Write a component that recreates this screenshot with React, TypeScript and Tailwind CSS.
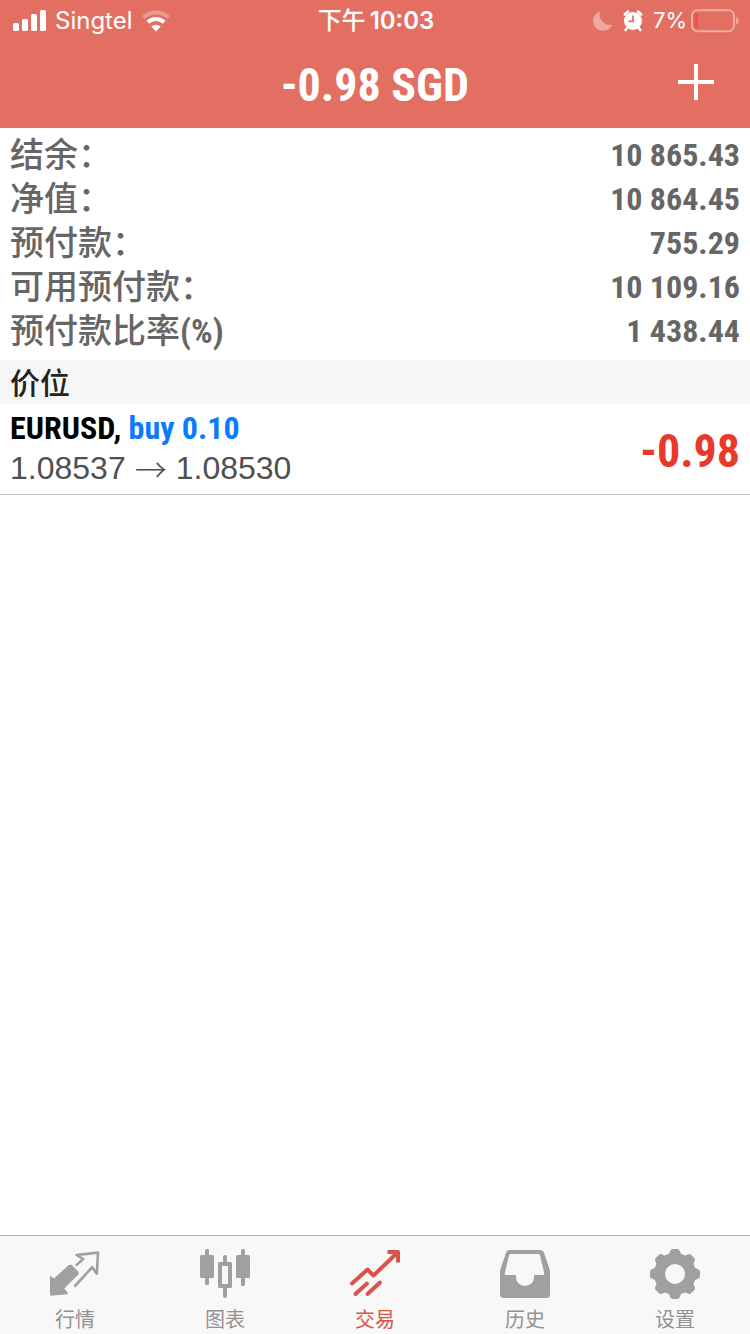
import type { ReactNode } from "react";

const account = [
  { label: "结余：", value: "10 865.43" },
  { label: "净值：", value: "10 864.45" },
  { label: "预付款：", value: "755.29" },
  { label: "可用预付款：", value: "10 109.16" },
  { label: "预付款比率", unit: "(%)", value: "1 438.44" },
];

const condensed = "font-['Roboto_Condensed','Liberation_Sans','Noto_Sans_CJK_SC',sans-serif]";

function SignalIcon() {
  return (
    <svg className="h-6 w-[34px]" viewBox="0 0 34 24" fill="currentColor" aria-hidden="true">
      <rect x="0" y="14" width="6" height="8" rx="1.6" />
      <rect x="9" y="10" width="6" height="12" rx="1.6" />
      <rect x="18" y="5" width="6" height="17" rx="1.6" />
      <rect x="27" y="1" width="6" height="21" rx="1.6" />
    </svg>
  );
}

function WifiIcon() {
  return (
    <svg className="h-6 w-[30px]" viewBox="0 0 30 24" fill="none" stroke="currentColor" aria-hidden="true">
      <path d="M2.2 8.6a18.4 18.4 0 0 1 25.6 0" strokeWidth="4" opacity="0.3" />
      <path d="M6.8 13.2a11.8 11.8 0 0 1 16.4 0" strokeWidth="4" />
      <path d="M10.2 17.6a7 7 0 0 1 9.6 0L15 22.4z" fill="currentColor" stroke="none" />
    </svg>
  );
}

function MoonIcon() {
  return (
    <svg className="h-6 w-5" viewBox="0 0 20 24" fill="currentColor" opacity="0.4" aria-hidden="true">
      <path d="M7 2.2A10 10 0 0 0 0 12a9.8 9.8 0 0 0 9.8 9.8 10 10 0 0 0 9.6-6.2C14 17.2 4.5 12.5 7 2.2z" />
    </svg>
  );
}

function AlarmIcon() {
  return (
    <svg className="h-6 w-5" viewBox="0 0 20 24" aria-hidden="true">
      <circle cx="10" cy="12" r="9" fill="currentColor" />
      <path
        d="M1.800 5.400 5 2.600M18.200 5.400 15 2.600M4.600 18.600 2.600 21M15.400 18.600l2 2.400"
        stroke="currentColor"
        strokeWidth="2.6"
        strokeLinecap="round"
        fill="none"
      />
      <path d="M10 6.4v6H5.4" stroke="#e26f62" strokeWidth="1.7" fill="none" />
    </svg>
  );
}

function BatteryIcon() {
  return (
    <svg className="h-6 w-12" viewBox="0 0 48 24" fill="none" aria-hidden="true">
      <rect x="1" y="1.2" width="42" height="21" rx="5.5" stroke="#fff" strokeOpacity="0.42" strokeWidth="2" />
      <path d="M45 8.2c2 .6 2.8 2 2.8 3.6s-.8 3-2.8 3.6z" fill="#fff" fillOpacity="0.42" />
      <path d="M7 4v15.4H6A2.6 2.6 0 0 1 3.6 17V6.6A2.6 2.6 0 0 1 6 4z" fill="#fd4a43" />
    </svg>
  );
}

function QuotesIcon() {
  return (
    <svg className="size-[50px]" viewBox="0 0 50 50" fill="none" aria-hidden="true">
      <path
        d="M25.8 16.6 33.2 10 26.5 6 48 3.6 46.8 24.8 42.2 18.2 24.5 37.5"
        stroke="currentColor"
        strokeWidth="2.6"
        strokeLinejoin="round"
      />
      <path
        d="M0 26.5 4 29.5 18.8 16 21.5 15.8 28.500 22.800 28.600 25.200 14.300 39.500 18.200 44 17 45.200 1 46.700 0 45.500z"
        fill="currentColor"
      />
    </svg>
  );
}

function ChartIcon() {
  return (
    <svg className="size-[50px]" viewBox="0 0 50 50" fill="currentColor" aria-hidden="true">
      <rect x="5" y="0" width="4" height="36" rx="1.5" />
      <rect x="0" y="6" width="14" height="23" rx="1.5" />
      <rect x="41" y="0" width="4" height="37" rx="1.5" />
      <rect x="36" y="6" width="14" height="23" rx="1.5" />
      <path
        fillRule="evenodd"
        d="M23 13V8a2 2 0 0 1 4 0v5h3.500a1.500 1.500 0 0 1 1.500 1.500v23a1.500 1.500 0 0 1-1.500 1.500H27v8a2 2 0 0 1-4 0v-8h-3.500a1.500 1.500 0 0 1-1.500-1.500v-23a1.500 1.500 0 0 1 1.500-1.500zM22 17v18h6V17z"
      />
    </svg>
  );
}

function TradeIcon() {
  return (
    <svg className="size-[50px]" viewBox="0 0 50 50" fill="none" stroke="currentColor" strokeWidth="4" aria-hidden="true">
      <path d="M2 34.500 17.500 20.500 23.500 26.500 46.500 4.500" strokeLinecap="round" strokeLinejoin="round" />
      <path d="M37.500 3H48v10.500" strokeLinejoin="round" />
      <path d="M5.500 45 17 34.500M17.500 45 30 33.500" strokeLinecap="round" />
    </svg>
  );
}

function HistoryIcon() {
  return (
    <svg className="size-[50px]" viewBox="0 0 50 50" fill="currentColor" fillRule="evenodd" aria-hidden="true">
      <path d="M10 1h30c2 0 3.200 1 4 2.800L50 21.500V45.500a3.500 3.500 0 0 1-3.500 3.500h-43A3.500 3.500 0 0 1 0 45.500V21.500L6 3.800C6.800 2 8 1 10 1zM11 5c-1 0-1.600.500-2 1.500L4.800 24c-.200 1.200.200 2 1.200 2H16v2.500a9 8.500 0 0 0 18 0V26h9c1 0 1.400-.800 1.200-2L40 6.500C39.600 5.500 39 5 38 5z" />
    </svg>
  );
}

const gearTeeth = [0, 45, 90, 135, 180, 225, 270, 315];

function GearIcon() {
  return (
    <svg className="size-[50px]" viewBox="0 0 50 50" fill="none" aria-hidden="true">
      <circle cx="25" cy="25" r="15.5" stroke="currentColor" strokeWidth="11" />
      <g fill="currentColor">
        {gearTeeth.map((angle) => (
          <path
            key={angle}
            transform={`rotate(${angle} 25 25)`}
            d="M15.500 7.500c2.500-.800 3.500-2 4.200-4.200C20.400 1 21.400 0 23 0h4c1.600 0 2.600 1 3.300 3.300.700 2.200 1.700 3.400 4.200 4.200L31 12H19z"
          />
        ))}
      </g>
    </svg>
  );
}

function Tab({ label, icon, active = false }: { label: string; icon: ReactNode; active?: boolean }) {
  return (
    <a
      href="#"
      aria-current={active ? "page" : undefined}
      className={`flex flex-col items-center gap-[7px] pt-3 ${active ? "text-[#d9534b]" : "text-[#a0a0a0]"}`}
    >
      {icon}
      <span className={`text-xl leading-7 ${active ? "text-[#d9534b]" : "text-[#929292]"}`}>{label}</span>
    </a>
  );
}

export default function App() {
  return (
    <div
      lang="zh-CN"
      className="flex min-h-screen flex-col bg-white font-['Liberation_Sans','Noto_Sans_CJK_SC',sans-serif]"
    >
      <header className="bg-[#e26f62] text-white">
        <div className="grid h-[42px] grid-cols-[1fr_auto_1fr] items-center pl-[13px] pr-[11px] font-['Inter','Noto_Sans_CJK_SC',sans-serif] text-2xl">
          <div className="flex items-center gap-2">
            <SignalIcon />
            <span>Singtel</span>
            <WifiIcon />
          </div>
          <div className="flex items-center gap-1 font-medium">
            <span>下午</span>
            <span className="font-semibold">10:03</span>
          </div>
          <div className="flex items-center justify-end">
            <MoonIcon />
            <span className="mx-2.5 flex">
              <AlarmIcon />
            </span>
            <span className="mr-1 text-[22px]">7%</span>
            <BatteryIcon />
          </div>
        </div>
        <div className="grid h-[86px] grid-cols-[1fr_auto_1fr] items-center px-9">
          <h1 className={`col-start-2 text-[46px] leading-none font-bold ${condensed}`}>-0.98 SGD</h1>
          <button type="button" aria-label="新订单" className="mb-1.5 justify-self-end">
            <svg className="size-9" viewBox="0 0 36 36" stroke="#fff" strokeWidth="4" aria-hidden="true">
              <path d="M18 0v36M0 18h36" />
            </svg>
          </button>
        </div>
      </header>

      <main className="flex-1">
        <dl className="px-2.5 pt-[5px] pb-[7px]">
          {account.map((row) => (
            <div key={row.label} className={`flex h-11 items-center justify-between text-[#666] ${condensed}`}>
              <dt className="text-[34px] leading-[44px] font-medium">
                {row.label}
                {row.unit && <span className="font-bold">{row.unit}</span>}
              </dt>
              <dd className="text-[32px] leading-[44px] font-bold">{row.value}</dd>
            </div>
          ))}
        </dl>

        <h2 className="bg-[#f6f6f6] px-2.5 pt-1 text-[30px] leading-10 font-medium text-[#222]">价位</h2>

        <div className="flex items-center justify-between border-b border-[#c8c8c8] px-2.5 pt-1 pb-1.5">
          <div>
            <div className={`text-[32px] leading-10 font-bold text-black ${condensed}`}>
              EURUSD, <span className="text-[#0a7aff]">buy 0.10</span>
            </div>
            <div className="flex h-10 items-center gap-[9px] text-[32px] leading-10 text-[#505050]">
              <span>1.08537</span>
              <span className="font-['Noto_Sans_CJK_SC',sans-serif] leading-none font-light">→</span>
              <span>1.08530</span>
            </div>
          </div>
          <div className={`pt-1.5 text-[46px] leading-none font-bold text-[#e8392b] ${condensed}`}>-0.98</div>
        </div>
      </main>

      <nav className="grid grid-cols-5 border-t border-[#b2b2b2] bg-[#f8f8f8] pt-px">
        <Tab label="行情" icon={<QuotesIcon />} />
        <Tab label="图表" icon={<ChartIcon />} />
        <Tab label="交易" icon={<TradeIcon />} active />
        <Tab label="历史" icon={<HistoryIcon />} />
        <Tab label="设置" icon={<GearIcon />} />
      </nav>
    </div>
  );
}
